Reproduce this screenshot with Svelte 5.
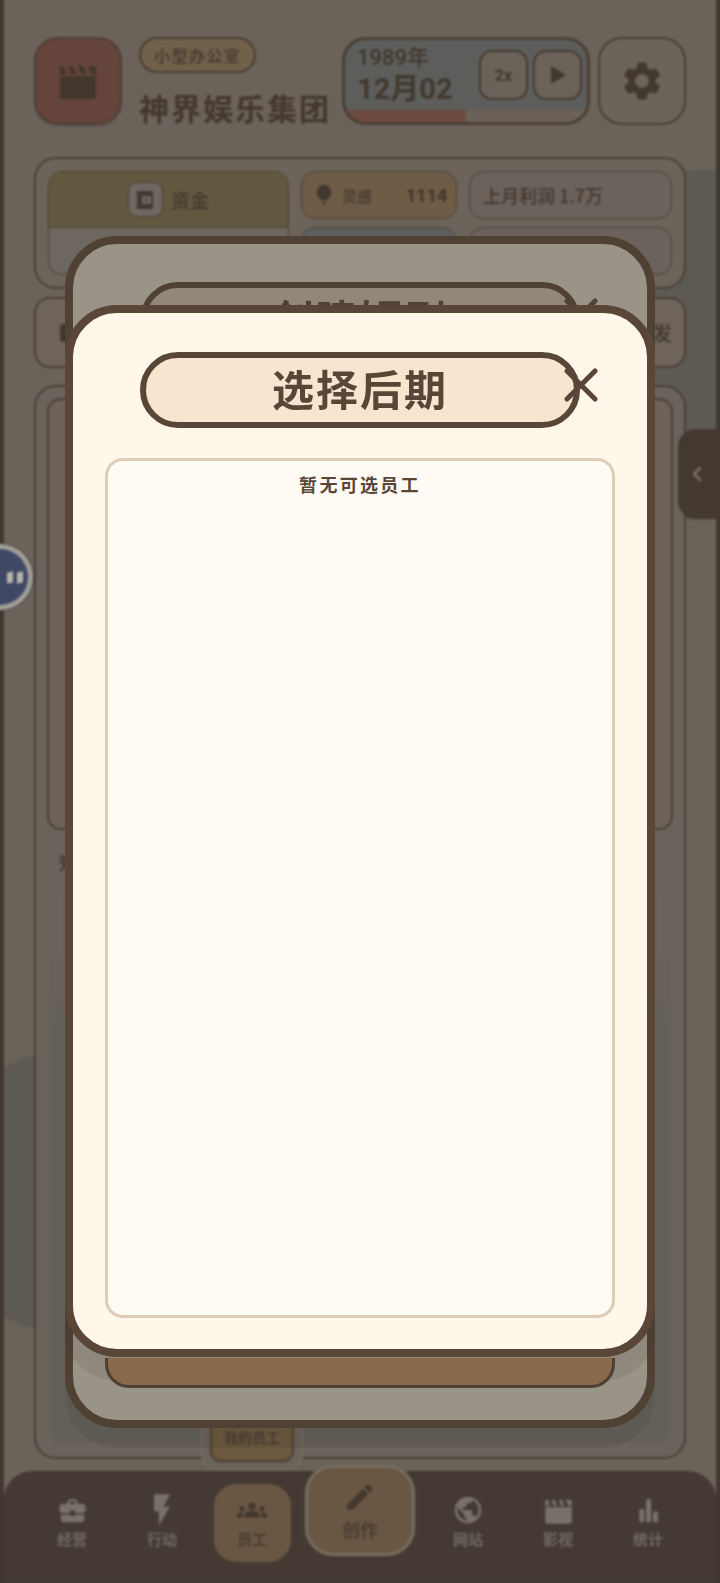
<script lang="ts">
    interface NavItem {
        label: string;
        icon: string;
        size: number;
        active?: boolean;
        create?: boolean;
    }

    const ICONS = {
        briefcase: 'M10 16v-1H3.01L3 19c0 1.11.89 2 2 2h14c1.11 0 2-.89 2-2v-4h-7v1h-4zm10-9h-4.01V5l-2-2h-4l-2 2v2H4c-1.1 0-2 .9-2 2v3c0 1.11.89 2 2 2h6v-2h4v2h6c1.1 0 2-.9 2-2V9c0-1.1-.9-2-2-2zm-6 0h-4V5h4v2z',
        bolt: 'M7 2v11h3v9l7-12h-4l4-8z',
        groups: 'M12 12.75c1.63 0 3.07.39 4.24.9 1.08.48 1.76 1.56 1.76 2.73V18H6v-1.61c0-1.18.68-2.26 1.76-2.73 1.17-.52 2.61-.91 4.24-.91zM4 13c1.1 0 2-.9 2-2s-.9-2-2-2-2 .9-2 2 .9 2 2 2zm1.13 1.1C4.76 14.04 4.39 14 4 14c-.99 0-1.93.21-2.78.58C.48 14.9 0 15.62 0 16.43V18h4.5v-1.61c0-.83.23-1.61.63-2.29zM20 13c1.1 0 2-.9 2-2s-.9-2-2-2-2 .9-2 2 .9 2 2 2zm4 3.43c0-.81-.48-1.53-1.22-1.85C21.93 14.21 20.99 14 20 14c-.39 0-.76.04-1.13.1.4.68.63 1.46.63 2.29V18H24v-1.57zM12 6c1.66 0 3 1.34 3 3s-1.34 3-3 3-3-1.34-3-3 1.34-3 3-3z',
        pencil: 'M3 17.25V21h3.75L17.81 9.94l-3.75-3.75L3 17.25zM20.71 7.04c.39-.39.39-1.02 0-1.41l-2.34-2.34c-.39-.39-1.02-.39-1.41 0l-1.83 1.83 3.75 3.75 1.83-1.83z',
        globe: 'M12 2C6.48 2 2 6.48 2 12s4.48 10 10 10 10-4.48 10-10S17.52 2 12 2zm-1 17.93c-3.95-.49-7-3.85-7-7.93 0-.62.08-1.21.21-1.79L9 15v1c0 1.1.9 2 2 2v1.93zm6.9-2.54c-.26-.81-1-1.39-1.9-1.39h-1v-3c0-.55-.45-1-1-1H8v-2h2c.55 0 1-.45 1-1V7h2c1.1 0 2-.9 2-2v-.41c2.93 1.19 5 4.06 5 7.41 0 2.08-.8 3.97-2.1 5.39z',
        clapper: 'M1 9h22v12a2 2 0 0 1-2 2H3a2 2 0 0 1-2-2zM1 3h2.2l2 5H1zM6 3h3l2 5H8zM12 3h3l2 5h-3zM18 3h3a2 2 0 0 1 2 2v3h-3z',
        bars: 'M5 13a2 2 0 0 1 4 0v7a2 2 0 0 1-4 0zM10.5 5a2 2 0 0 1 4 0v15a2 2 0 0 1-4 0zM16 15a2 2 0 0 1 4 0v5a2 2 0 0 1-4 0z',
        gear: 'M19.14 12.94c.04-.3.06-.61.06-.94 0-.32-.02-.64-.07-.94l2.03-1.58c.18-.14.23-.41.12-.61l-1.92-3.32c-.12-.22-.37-.29-.59-.22l-2.39.96c-.5-.38-1.03-.7-1.62-.94l-.36-2.54c-.04-.24-.24-.41-.48-.41h-3.84c-.24 0-.43.17-.47.41l-.36 2.54c-.59.24-1.13.57-1.62.94l-2.39-.96c-.22-.08-.47 0-.59.22L2.74 8.87c-.12.21-.08.47.12.61l2.03 1.58c-.05.3-.09.63-.09.94s.02.64.07.94l-2.03 1.58c-.18.14-.23.41-.12.61l1.92 3.32c.12.22.37.29.59.22l2.39-.96c.5.38 1.03.7 1.62.94l.36 2.54c.05.24.24.41.48.41h3.84c.24 0 .44-.17.47-.41l.36-2.54c.59-.24 1.13-.56 1.62-.94l2.39.96c.22.08.47 0 .59-.22l1.92-3.32c.12-.22.07-.47-.12-.61l-2.01-1.58zM12 15.6c-1.98 0-3.6-1.62-3.6-3.6s1.62-3.6 3.6-3.6 3.6 1.62 3.6 3.6-1.62 3.6-3.6 3.6z',
        wallet: 'M4 3h14a2 2 0 0 1 2 2v14a2 2 0 0 1-2 2H4zM11 8a2 2 0 0 0-2 2v4a2 2 0 0 0 2 2h7V8zM12 11h3v2h-3z',
        bulb: 'M12 1a8 8 0 0 0-5 14.2c.8.7 1.2 1.5 1.3 2.3h7.4c.1-.8.5-1.6 1.3-2.3A8 8 0 0 0 12 1zM9 19h6v1.5H9zM10 21.5h4V23h-4z'
    };

    const navLeft: NavItem[] = [
        { label: '经营', icon: ICONS.briefcase, size: 31 },
        { label: '行动', icon: ICONS.bolt, size: 38 },
        { label: '员工', icon: ICONS.groups, size: 30, active: true }
    ];
    const navRight: NavItem[] = [
        { label: '网站', icon: ICONS.globe, size: 32 },
        { label: '影视', icon: ICONS.clapper, size: 29 },
        { label: '统计', icon: ICONS.bars, size: 30 }
    ];
</script>

{#snippet icon(d: string, size: number)}
    <svg viewBox="0 0 24 24" width={size} height={size} fill="currentColor" fill-rule="evenodd"><path {d} /></svg>
{/snippet}

{#snippet navItem(item: NavItem)}
    <div class="nav-item" class:active={item.active}>
        <div class="nav-icon">{@render icon(item.icon, item.size)}</div>
        <span>{item.label}</span>
    </div>
{/snippet}

{#snippet modalTitle(text: string)}
    <div class="modal-title">
        <span>{text}</span>
        <svg class="close" viewBox="0 0 34 34" width="34" height="34" fill="none" stroke="currentColor" stroke-width="5" stroke-linecap="round">
            <path d="M3 3l28 28M31 3L3 31" />
        </svg>
    </div>
{/snippet}

<div class="root">
    <div class="blob blob-right"></div>
    <div class="blob blob-left"></div>

    <div class="page">
        <header class="header">
            <div class="logo">{@render icon(ICONS.clapper, 40)}</div>
            <div class="company">
                <span class="level">小型办公室</span>
                <span class="company-name">神界娱乐集团</span>
            </div>
            <div class="date">
                <div class="date-main">
                    <div class="date-text">
                        <span class="year">1989年</span>
                        <span class="day">12月02</span>
                    </div>
                    <div class="speed">2x</div>
                    <div class="speed">
                        <svg viewBox="0 0 20 24" width="20" height="24" fill="currentColor"><path d="M3 3l15 9-15 9z" /></svg>
                    </div>
                </div>
                <div class="month-track"><div class="month-fill" style="width: 50%"></div></div>
            </div>
            <div class="settings">{@render icon(ICONS.gear, 46)}</div>
        </header>

        <section class="stats">
            <div class="funds">
                <div class="funds-head">
                    <span class="wallet">{@render icon(ICONS.wallet, 24)}</span>
                    <span>资金</span>
                </div>
            </div>
            <div class="stat stat-idea">
                <span class="bulb">{@render icon(ICONS.bulb, 22)}</span>
                <span class="stat-label">灵感</span>
                <span class="stat-value">1114</span>
            </div>
            <div class="stat stat-plain">上月利润 1.7万</div>
            <div class="stat stat-blue"></div>
            <div class="stat stat-plain"></div>
        </section>

        <nav class="tabs">
            <div class="tab tab-first"><span class="tab-mark"></span></div>
            <div class="tab tab-last">研发</div>
        </nav>

        <main class="main">
            <div class="list-card"></div>
            <div class="known">
                <span class="known-title">知名员工</span>
                <div class="known-item"></div>
            </div>
        </main>
    </div>

    <nav class="bottom-nav">
        {#each navLeft as item}
            {@render navItem(item)}
        {/each}
        <div class="create">
            {@render icon(ICONS.pencil, 34)}
            <span>创作</span>
        </div>
        {#each navRight as item}
            {@render navItem(item)}
        {/each}
    </nav>

    <div class="subtab"><span>我的员工</span></div>

    <div class="side-handle">
        <svg viewBox="0 0 12 20" width="12" height="20" fill="none" stroke="currentColor" stroke-width="2.5" stroke-linecap="round" stroke-linejoin="round"><path d="M9 4l-6 6 6 6" /></svg>
    </div>

    <div class="float-ball">
        <div class="float-face"><i></i><i></i></div>
    </div>

    <div class="backdrop"></div>

    <div class="modal modal-under">
        {@render modalTitle('创建短剧')}
        <div class="modal-action"></div>
    </div>

    <div class="modal modal-top">
        {@render modalTitle('选择后期')}
        <div class="picker">
            <p>暂无可选员工</p>
        </div>
    </div>
</div>

<style>
    :global(body) {
        margin: 0;
    }

    .root {
        position: relative;
        width: 720px;
        height: 1583px;
        overflow: hidden;
        background: #6b6259;
        font-family: "Noto Sans CJK SC", "Noto Sans", sans-serif;
        font-weight: 700;
        color: #43382e;
    }

    .blob {
        position: absolute;
        border-radius: 50%;
        background: #5c5a53;
    }

    .blob-right {
        left: 525px;
        top: 170px;
        width: 350px;
        height: 350px;
    }

    .blob-left {
        left: -68px;
        top: 1049px;
        width: 286px;
        height: 286px;
    }

    .page {
        position: relative;
        box-sizing: border-box;
        width: 720px;
        height: 1583px;
        padding: 37px 34px 0;
    }

    .page::before,
    .page::after {
        content: "";
        position: absolute;
        top: 0;
        bottom: 0;
        width: 4px;
        background: #423830;
    }

    .page::before {
        left: 0;
    }

    .page::after {
        right: 0;
    }

    .header {
        display: flex;
        gap: 8px;
        height: 88px;
    }

    .logo {
        display: flex;
        align-items: center;
        justify-content: center;
        box-sizing: border-box;
        width: 88px;
        height: 88px;
        background: #65443b;
        border: 2px solid #4a3f34;
        border-radius: 24px;
        box-shadow: 0 3px 0 rgba(0, 0, 0, 0.06);
    }

    .company {
        flex: 1;
        display: flex;
        flex-direction: column;
        align-items: flex-start;
        padding-left: 9px;
    }

    .level {
        box-sizing: border-box;
        height: 36px;
        padding: 0 13px;
        line-height: 32px;
        font-size: 16px;
        letter-spacing: 1.4px;
        font-weight: 500;
        white-space: nowrap;
        background: #71604a;
        border: 2px solid #4a3f34;
        border-radius: 18px;
    }

    .company-name {
        margin-top: 14px;
        font-size: 30px;
        line-height: 40px;
        letter-spacing: 2px;
        white-space: nowrap;
    }

    .date {
        display: flex;
        flex-direction: column;
        box-sizing: border-box;
        width: 248px;
        height: 88px;
        overflow: hidden;
        background: #5d5e5c;
        border: 3px solid #4a3f34;
        border-radius: 24px;
    }

    .date-main {
        flex: 1;
        display: flex;
        align-items: center;
        gap: 5px;
        padding: 0 5px 0 12px;
    }

    .date-text {
        flex: 1;
        display: flex;
        flex-direction: column;
        font-family: Roboto, "Noto Sans CJK SC", sans-serif;
        font-weight: 500;
    }

    .year {
        font-size: 22px;
        line-height: 28px;
    }

    .day {
        font-size: 29px;
        line-height: 34px;
        font-weight: 700;
    }

    .speed {
        display: flex;
        align-items: center;
        justify-content: center;
        box-sizing: border-box;
        width: 49px;
        height: 50px;
        font-family: Roboto, sans-serif;
        font-size: 16px;
        background: #6b625a;
        border: 2px solid #463b31;
        border-radius: 13px;
    }

    .month-track {
        height: 12px;
        background: #6b6158;
    }

    .month-fill {
        height: 100%;
        background: #6e4a3f;
    }

    .settings {
        display: flex;
        align-items: center;
        justify-content: center;
        box-sizing: border-box;
        width: 88px;
        height: 88px;
        background: #6c6458;
        border: 2px solid #4a3f34;
        border-radius: 24px;
    }

    .stats {
        display: grid;
        grid-template-columns: 241px 156px 1fr;
        grid-template-rows: 48px 48px;
        column-gap: 12px;
        row-gap: 8px;
        box-sizing: border-box;
        height: 132px;
        margin-top: 32px;
        padding: 12px;
        background: #6c635a;
        border: 2px solid #4a3f34;
        border-radius: 22px;
    }

    .funds {
        grid-row: span 2;
        overflow: hidden;
        background: #6e675f;
        border: 1.5px solid #4a3f34;
        border-radius: 14px;
    }

    .funds-head {
        display: flex;
        align-items: center;
        justify-content: center;
        gap: 8px;
        height: 55px;
        font-size: 19px;
        font-weight: 500;
        background: #625840;
        border-bottom: 1.5px solid #4a3f34;
    }

    .wallet {
        display: flex;
        align-items: center;
        justify-content: center;
        box-sizing: border-box;
        width: 35px;
        height: 35px;
        background: #6d6862;
        border: 1.5px solid #4a3f34;
        border-radius: 9px;
    }

    .stat {
        display: flex;
        align-items: center;
        box-sizing: border-box;
        border: 1.5px solid #4a3f34;
        border-radius: 14px;
    }

    .stat-idea {
        padding: 0 9px 0 11px;
        background: #6f5c47;
    }

    .bulb {
        display: flex;
    }

    .stat-label {
        margin-left: 7px;
        font-size: 15px;
        font-weight: 500;
    }

    .stat-value {
        margin-left: auto;
        font-family: Roboto, sans-serif;
        font-size: 19px;
        letter-spacing: -0.5px;
    }

    .stat-plain {
        padding-left: 13px;
        font-size: 18px;
        font-weight: 500;
        background: #6b625b;
    }

    .stat-blue {
        background: #5d5f5f;
    }

    .tabs {
        display: flex;
        justify-content: space-between;
        height: 71px;
        margin-top: 8px;
    }

    .tab {
        display: flex;
        align-items: center;
        box-sizing: border-box;
        width: 120px;
        background: #6e6459;
        border: 2px solid #4a3f34;
        border-radius: 16px;
    }

    .tab-first {
        padding-left: 24px;
    }

    .tab-mark {
        width: 14px;
        height: 18px;
        background: #43382e;
        border-radius: 3px;
    }

    .tab-last {
        justify-content: flex-end;
        padding-right: 12px;
        font-size: 20px;
        font-weight: 500;
    }

    .main {
        display: flex;
        flex-direction: column;
        gap: 10px;
        box-sizing: border-box;
        height: 1074px;
        margin-top: 17px;
        padding: 11px 11px 12px;
        background: #6b625b;
        border: 2px solid #4a3f34;
        border-radius: 22px;
    }

    .list-card {
        flex: none;
        height: 432px;
        box-sizing: border-box;
        background: #6c6258;
        border: 2px solid #4a3f34;
        border-radius: 14px;
    }

    .known {
        flex: 1;
        padding: 8px 11px;
        background: linear-gradient(#6b625b 0, #6b625b 110px, #63605a 190px);
        border: 1.5px solid #6f675f;
        border-radius: 14px;
    }

    .known-title {
        font-size: 18px;
        font-weight: 500;
    }

    .known-item {
        height: 74px;
        margin-top: 10px;
        border: 1.5px solid #6f675f;
        border-radius: 14px;
    }

    .subtab {
        position: absolute;
        left: 201px;
        top: 1410px;
        box-sizing: border-box;
        width: 102px;
        height: 60px;
        padding: 0 7px 6px;
        background: #6b6259;
        border: 2px solid #716b62;
        border-radius: 0 0 16px 16px;
    }

    .subtab span {
        display: flex;
        align-items: flex-end;
        justify-content: center;
        box-sizing: border-box;
        height: 100%;
        padding-bottom: 13px;
        font-size: 14px;
        font-weight: 500;
        background: #6c5840;
        border: 2px solid #4a3f34;
        border-radius: 0 0 11px 11px;
    }

    .bottom-nav {
        position: absolute;
        left: 4px;
        right: 4px;
        bottom: 0;
        display: flex;
        box-sizing: border-box;
        height: 112px;
        padding: 13px 23px 0;
        background: #443a33;
        border-radius: 28px 28px 0 0;
        color: #78706a;
    }

    .nav-item {
        display: flex;
        flex-direction: column;
        align-items: center;
        box-sizing: border-box;
        width: 77px;
        height: 78px;
        margin: 0 6.5px;
        padding-top: 9px;
        font-size: 15px;
        font-weight: 500;
        border-radius: 22px;
    }

    .nav-item.active {
        background: #6a5743;
        color: #43382e;
    }

    .nav-icon {
        display: flex;
        align-items: center;
        justify-content: center;
        height: 34px;
        margin-bottom: 2px;
    }

    .nav-item span {
        line-height: 20px;
    }

    .create {
        display: flex;
        flex-direction: column;
        align-items: center;
        box-sizing: border-box;
        width: 110px;
        height: 91px;
        margin: -19px 8px 0;
        padding-top: 12px;
        font-size: 18px;
        font-weight: 500;
        line-height: 24px;
        background: #6a5743;
        border: 3px solid #756e61;
        border-radius: 28px;
        color: #43382e;
    }

    .create span {
        margin-top: 3px;
    }

    .side-handle {
        position: absolute;
        left: 678px;
        top: 429px;
        display: flex;
        align-items: center;
        box-sizing: border-box;
        width: 42px;
        height: 90px;
        padding-left: 13px;
        background: #44392f;
        border-radius: 18px 0 0 18px;
        color: #7b7067;
    }

    .float-ball {
        position: absolute;
        left: -33px;
        top: 544px;
        box-sizing: border-box;
        width: 66px;
        height: 66px;
        padding: 5px;
        background: #a19e96;
        border-radius: 50%;
        box-shadow: 0 0 0 1px #4b4a4c;
    }

    .float-face {
        display: flex;
        align-items: center;
        justify-content: flex-end;
        gap: 4px;
        box-sizing: border-box;
        height: 100%;
        padding-right: 5px;
        background: #3f4966;
        border-radius: 50%;
    }

    .float-face i {
        width: 6px;
        height: 11px;
        background: #b8b4ab;
        transform: skewY(-12deg);
    }

    /* the page behind the dialogs is slightly out of focus */
    .backdrop {
        position: absolute;
        inset: 0;
        backdrop-filter: blur(1px);
    }

    .modal {
        position: absolute;
        left: 65px;
        display: flex;
        flex-direction: column;
        box-sizing: border-box;
        width: 590px;
        border: 8px solid;
        border-radius: 52px;
    }

    .modal-under {
        top: 236px;
        height: 1192px;
        padding: 38px 32px 32px;
        background: #9a9388;
        border-color: #4f4235;
        color: #4f4235;
        box-shadow: 0 20px 0 rgba(40, 35, 30, 0.1);
    }

    .modal-under .modal-title {
        background: #918878;
    }

    /* only the part below the top dialog's edge shows, and it stays clear of that dialog's shadow */
    .modal-action {
        position: relative;
        z-index: 1;
        margin-top: auto;
        height: 30px;
        box-sizing: border-box;
        background: #88694b;
        border: 3px solid #4e3f32;
        border-top: none;
        border-radius: 0 0 24px 24px;
    }

    .modal-top {
        top: 305px;
        height: 1052px;
        padding: 39px 32px 31px;
        background: #fff7ea;
        border-color: #5a4637;
        color: #5a4637;
        box-shadow: 0 24px 0 rgba(40, 35, 30, 0.1);
    }

    .modal-title {
        position: relative;
        display: flex;
        align-items: center;
        justify-content: center;
        box-sizing: border-box;
        width: 440px;
        height: 76px;
        margin-left: 35px;
        padding-bottom: 5px;
        font-size: 42px;
        letter-spacing: 2px;
        background: #f7e5cf;
        border: 6px solid currentColor;
        border-radius: 38px;
    }

    .close {
        position: absolute;
        right: -24px;
        top: 10px;
    }

    .picker {
        flex: 1;
        margin-top: 30px;
        box-sizing: border-box;
        background: #fffbf4;
        border: 3px solid #dccdb8;
        border-radius: 18px;
    }

    .picker p {
        margin: 0;
        padding-top: 10px;
        font-size: 18px;
        line-height: 26px;
        letter-spacing: 2.3px;
        text-align: center;
    }
</style>
